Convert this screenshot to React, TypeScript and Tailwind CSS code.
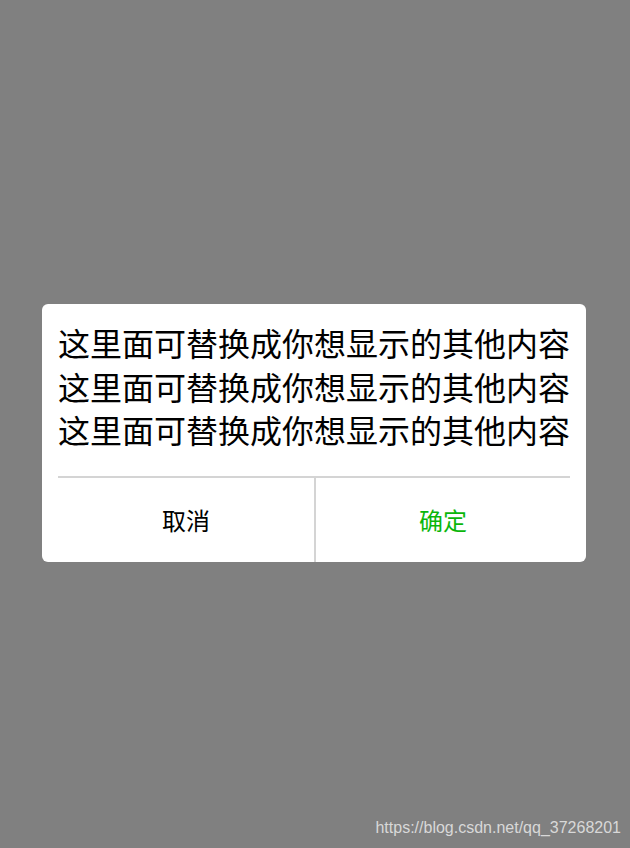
export default function App() {
  const line = "这里面可替换成你想显示的其他内容";
  return (
    <div
      className="h-[848px] w-[630px] bg-[#808080] flex flex-col pl-[42px] pr-[44px] pt-[304px] relative"
      style={{ fontFamily: '"Noto Sans CJK SC", "Noto Sans", sans-serif' }}
    >
      <div className="bg-white rounded-[6px] flex flex-col">
        <div className="px-[16px] pt-[17px] pb-[24px] text-[32px] leading-[43.5px] text-black whitespace-nowrap">
          <p>{line}</p>
          <p>{line}</p>
          <p>{line}</p>
        </div>
        <div className="mx-[16px] h-[2px] bg-[#d4d4d4]" />
        <div className="mx-[16px] flex h-[84px]">
          <button className="w-[256px] flex items-center justify-center text-[24px] text-black">
            取消
          </button>
          <div className="w-[2px] bg-[#d4d4d4]" />
          <button className="flex-1 flex items-center justify-center text-[24px] text-[#0ab60a]">
            确定
          </button>
        </div>
      </div>
      <div className="absolute right-[9px] bottom-[8px] text-[16px] text-[#d8d8d8]" style={{ fontFamily: '"Liberation Sans", Arial, sans-serif' }}>
        https://blog.csdn.net/qq_37268201
      </div>
    </div>
  );
}
